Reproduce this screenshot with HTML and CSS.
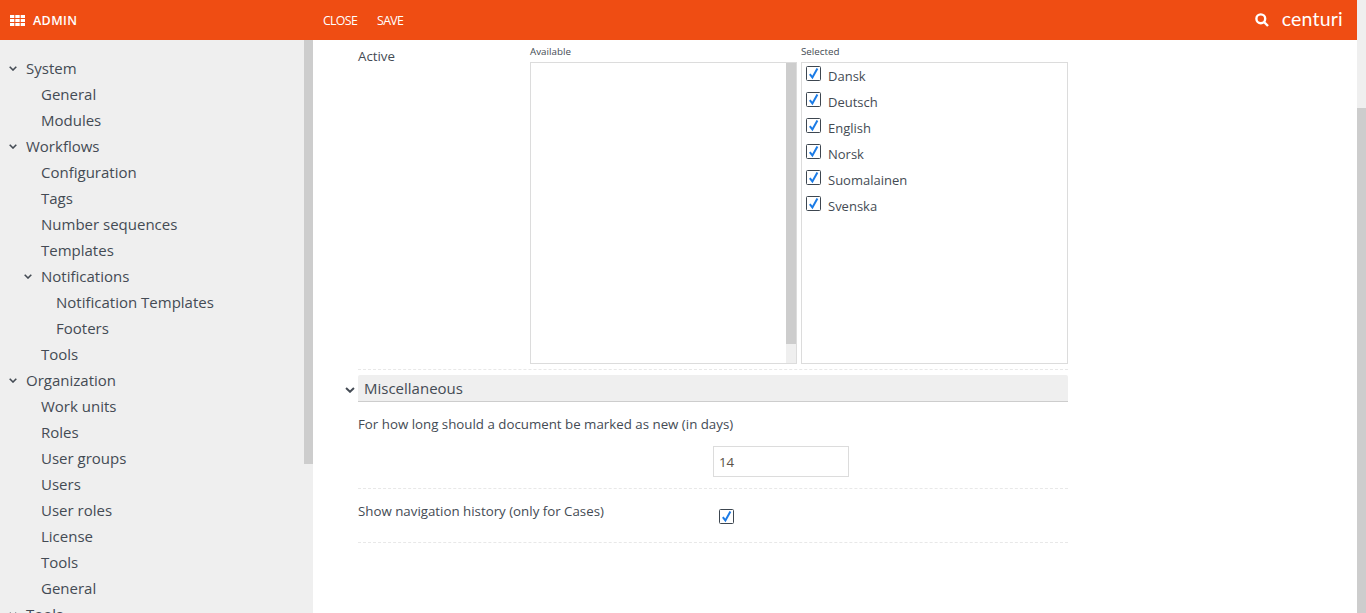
FILE: index.html
```html
<!DOCTYPE html>
<html lang="en">
<head>
<meta charset="utf-8">
<title>Admin</title>
<link rel="stylesheet" href="styles.css">
</head>
<body>
<svg class="defs" width="0" height="0" aria-hidden="true">
  <symbol id="chev" viewBox="0 0 8 5"><path d="M0.7 0.8L4 4l3.3-3.2" fill="none" stroke="currentColor" stroke-width="1.6"/></symbol>
  <symbol id="check" viewBox="0 0 15 15"><rect x="0.5" y="0.5" width="14" height="14" rx="1" fill="#fff" stroke="#3d4650"/><path d="M3.8 8.2l2.6 3.2L11.4 2.6" fill="none" stroke="#1b7be6" stroke-width="2"/></symbol>
</svg>
<div class="page">
  <div class="app">
    <header class="topbar">
      <div class="brand">
        <svg class="grid-icon" width="15" height="11" viewBox="0 0 15 11"><path fill="#fff" d="M0 0h4.3v3H0zM5.3 0h4.4v3H5.3zM10.7 0H15v3h-4.3zM0 4h4.3v3H0zM5.3 4h4.4v3H5.3zM10.7 4H15v3h-4.3zM0 8h4.3v3H0zM5.3 8h4.4v3H5.3zM10.7 8H15v3h-4.3z"/></svg>
        <span class="brand-name">ADMIN</span>
      </div>
      <nav class="actions"><span>CLOSE</span><span>SAVE</span></nav>
      <div class="logo">
        <svg class="search" width="14" height="14" viewBox="0 0 14 14"><circle cx="5.8" cy="5.8" r="4.4" fill="none" stroke="#fff" stroke-width="2.4"/><path d="M9 9l4 4" stroke="#fff" stroke-width="2.4"/></svg>
        <span class="logo-text">centuri</span>
      </div>
    </header>
    <div class="body">
      <aside class="sidebar">
        <ul class="tree">
          <li class="l1"><svg class="chev"><use href="#chev"/></svg>System</li>
          <li class="l2">General</li>
          <li class="l2">Modules</li>
          <li class="l1"><svg class="chev"><use href="#chev"/></svg>Workflows</li>
          <li class="l2">Configuration</li>
          <li class="l2">Tags</li>
          <li class="l2">Number sequences</li>
          <li class="l2">Templates</li>
          <li class="l2 parent"><svg class="chev"><use href="#chev"/></svg>Notifications</li>
          <li class="l3">Notification Templates</li>
          <li class="l3">Footers</li>
          <li class="l2">Tools</li>
          <li class="l1"><svg class="chev"><use href="#chev"/></svg>Organization</li>
          <li class="l2">Work units</li>
          <li class="l2">Roles</li>
          <li class="l2">User groups</li>
          <li class="l2">Users</li>
          <li class="l2">User roles</li>
          <li class="l2">License</li>
          <li class="l2">Tools</li>
          <li class="l2">General</li>
          <li class="l1"><svg class="chev"><use href="#chev"/></svg>Tools</li>
        </ul>
        <div class="side-scroll"><div class="side-thumb"></div></div>
      </aside>
      <main class="content">
        <section class="form">
          <div class="row-active">
            <div class="active-label">Active</div>
            <div class="lists">
              <div class="list-col">
                <div class="list-title">Available</div>
                <div class="listbox">
                  <div class="list-scroll"><div class="list-thumb"></div></div>
                </div>
              </div>
              <div class="list-col">
                <div class="list-title">Selected</div>
                <div class="listbox items">
                  <div class="item"><svg class="check"><use href="#check"/></svg>Dansk</div>
                  <div class="item"><svg class="check"><use href="#check"/></svg>Deutsch</div>
                  <div class="item"><svg class="check"><use href="#check"/></svg>English</div>
                  <div class="item"><svg class="check"><use href="#check"/></svg>Norsk</div>
                  <div class="item"><svg class="check"><use href="#check"/></svg>Suomalainen</div>
                  <div class="item"><svg class="check"><use href="#check"/></svg>Svenska</div>
                </div>
              </div>
            </div>
          </div>
          <div class="section-head">
            <svg class="chev head-chev"><use href="#chev"/></svg>
            <span>Miscellaneous</span>
          </div>
          <div class="row-days">
            <div class="days-label">For how long should a document be marked as new (in days)</div>
            <input class="days-input" type="text" value="14">
          </div>
          <div class="row-history">
            <div class="history-label">Show navigation history (only for Cases)</div>
            <svg class="check history-check"><use href="#check"/></svg>
          </div>
        </section>
      </main>
    </div>
  </div>
  <div class="page-scroll"><div class="page-thumb"></div></div>
</div>
</body>
</html>
```
FILE: styles.css
```css
* { box-sizing: border-box; }
html, body { margin: 0; height: 100%; overflow: hidden; }
body { font-family: "Open Sans", "Noto Sans", sans-serif; color: #444b54; background: #fff; }
.defs { position: absolute; }
.page { display: flex; height: 613px; }
.app { width: 1357px; display: flex; flex-direction: column; }
.page-scroll { width: 9px; background: #efefef; padding-top: 108px; }
.page-thumb { height: 505px; background: #cdcdcd; }

.topbar { height: 40px; flex: none; background: #ef4d13; color: #fff; display: flex; align-items: center; }
.brand { width: 313px; padding-left: 10px; display: flex; align-items: center; gap: 8px; }
.brand-name { font-size: 12.5px; font-weight: 600; letter-spacing: 0.35px; }
.actions { display: flex; gap: 20px; padding-left: 10px; font-size: 12.4px; font-weight: 500; letter-spacing: -0.7px; }
.logo { margin-left: auto; padding-right: 14px; display: flex; align-items: center; gap: 13px; }
.logo-text { font-family: "Lato", sans-serif; font-size: 19.5px; line-height: 20px; letter-spacing: 0.2px; position: relative; top: -1px; }

.body { flex: 1; display: flex; min-height: 0; }
.sidebar { width: 313px; flex: none; background: #efefef; display: flex; overflow: hidden; }
.tree { list-style: none; margin: 0; padding: 15px 0 0; flex: 1; font-size: 15px; line-height: 26px; }
.tree li { height: 26px; white-space: nowrap; display: flex; align-items: center; }
.chev { width: 8px; height: 5px; color: #444b54; flex: none; margin-right: 9px; }
.l1 { padding-left: 9px; }
.l2 { padding-left: 41px; }
.l2.parent { padding-left: 24px; }
.l3 { padding-left: 56px; }
.side-scroll { width: 9px; flex: none; }
.side-thumb { height: 424px; background: #cdcdcd; }

.content { flex: 1; min-width: 0; overflow: hidden; padding-left: 45px; }
.form { width: 710px; font-size: 13.3px; }
.row-active { display: flex; height: 330px; padding-bottom: 5px; border-bottom: 1px dashed #e8e8e8; }
.active-label { width: 172px; padding-top: 7px; line-height: 18px; }
.lists { display: flex; gap: 4px; }
.list-col { width: 267px; display: flex; flex-direction: column; }
.list-title { height: 22px; padding-top: 5px; font-size: 9.8px; line-height: 14px; }
.listbox { height: 302px; border: 1px solid #dcdcdc; background: #fff; }
.listbox:not(.items) { display: flex; justify-content: flex-end; }
.list-scroll { width: 10px; background: #efefef; }
.list-thumb { height: 281px; background: #cdcdcd; }
.item { height: 26px; display: flex; align-items: center; padding-left: 4px; font-size: 13px; }
.check { width: 15px; height: 15px; flex: none; }
.item .check { margin-right: 7px; position: relative; top: -3px; }

.section-head { position: relative; height: 27px; margin-top: 5px; background: #efefef; border-bottom: 1px solid #cdcdcd; border-radius: 2px 2px 0 0; padding-left: 6px; font-size: 15px; line-height: 27px; }
.head-chev { position: absolute; left: -13px; top: 12px; width: 10px; height: 6px; margin: 0; }
.row-days { height: 87px; border-bottom: 1px dashed #e8e8e8; padding-top: 13px; }
.days-label { line-height: 18px; }
.days-input { display: block; margin: 13px 0 0 355px; width: 136px; height: 31px; border: 1px solid #dcdcdc; padding: 0 5px; font: inherit; color: #5c5148; background: #fff; outline: none; }
.row-history { height: 54px; border-bottom: 1px dashed #e8e8e8; display: flex; align-items: flex-start; padding-top: 13px; }
.history-label { width: 361px; line-height: 18px; }
.history-check { margin-top: 7px; }
```
